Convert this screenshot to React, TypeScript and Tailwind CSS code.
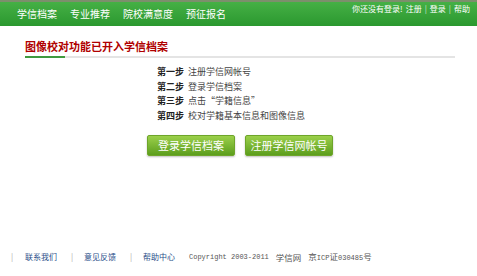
import React from "react";

const navItems = ["学信档案", "专业推荐", "院校满意度", "预征报名"];

const steps = [
  { no: "第一步", text: "注册学信网帐号" },
  { no: "第二步", text: "登录学信档案" },
  { no: "第三步", text: "点击“学籍信息”" },
  { no: "第四步", text: "校对学籍基本信息和图像信息" },
];

const font = { fontFamily: '"Noto Sans CJK SC", "DejaVu Sans", sans-serif' };
const mono = { fontFamily: '"Liberation Mono", "Noto Sans CJK SC", monospace' };

export default function App() {
  return (
    <div className="w-[477px] h-[276px] bg-white flex flex-col" style={font}>
      {/* top bar */}
      <div className="h-[26px] border-t-2 border-[#7c8f6c] bg-gradient-to-b from-[#45b045] to-[#2a982f] flex items-start justify-between">
        <div className="flex gap-[13px] pl-[17px] pt-[5px] text-[10px] leading-[14px] text-white">
          {navItems.map((n) => (
            <span key={n}>{n}</span>
          ))}
        </div>
        <div className="pr-[7px] pt-[1px] text-[8px] leading-[12px] text-white flex gap-[3px]">
          <span>你还没有登录!</span>
          <span>注册</span>
          <span className="text-[#cfe8cf]">|</span>
          <span>登录</span>
          <span className="text-[#cfe8cf]">|</span>
          <span>帮助</span>
        </div>
      </div>

      {/* title */}
      <div className="pl-[25px] pr-[22px] pt-[13px]">
        <div className="text-[11px] leading-[14px] font-bold text-[#b00000]">图像校对功能已开入学信档案</div>
        <div className="mt-[3px] flex h-[2px]">
          <div className="w-[40px] bg-[#3f9a3f]" />
          <div className="flex-1 bg-[#e4e4e4]" />
        </div>
      </div>

      {/* steps */}
      <div className="pl-[157px] pt-[7px] flex flex-col text-[9px] leading-[14.5px]">
        {steps.map((s) => (
          <div key={s.no} className="flex gap-[4px]">
            <span className="font-bold text-[#222]">{s.no}</span>
            <span className="text-[#444]">{s.text}</span>
          </div>
        ))}
      </div>

      {/* buttons */}
      <div className="pl-[147px] pt-[12px] flex gap-[10px]">
        <button className="w-[88px] h-[21px] rounded-[2px] border border-[#6ea52a] bg-gradient-to-b from-[#9bd04a] to-[#5c9e1c] text-white text-[11px] leading-none shadow-[0_1px_2px_rgba(0,0,0,0.25)]">
          登录学信档案
        </button>
        <button className="w-[88px] h-[21px] rounded-[2px] border border-[#6ea52a] bg-gradient-to-b from-[#9bd04a] to-[#5c9e1c] text-white text-[11px] leading-none shadow-[0_1px_2px_rgba(0,0,0,0.25)]">
          注册学信网帐号
        </button>
      </div>

      {/* footer */}
      <div className="mt-auto mb-[13px] pl-[11px] flex items-center text-[8px] leading-[10px] text-[#2b4f8a]">
        <span className="text-[#aaa] w-[14px]">|</span>
        <span className="w-[46px]">联系我们</span>
        <span className="text-[#aaa] w-[13px]">|</span>
        <span className="w-[46px]">意见反馈</span>
        <span className="text-[#aaa] w-[13px]">|</span>
        <span className="w-[46px]">帮助中心</span>
        <span className="flex items-center gap-[7px] text-[#555] text-[8.5px]">
          <span className="text-[7px]" style={mono}>Copyright 2003-2011</span>
          <span>学信网</span>
          <span>
            京<span className="text-[7px]" style={mono}>ICP</span>证<span className="text-[7px]" style={mono}>030485</span>号
          </span>
        </span>
      </div>
    </div>
  );
}
